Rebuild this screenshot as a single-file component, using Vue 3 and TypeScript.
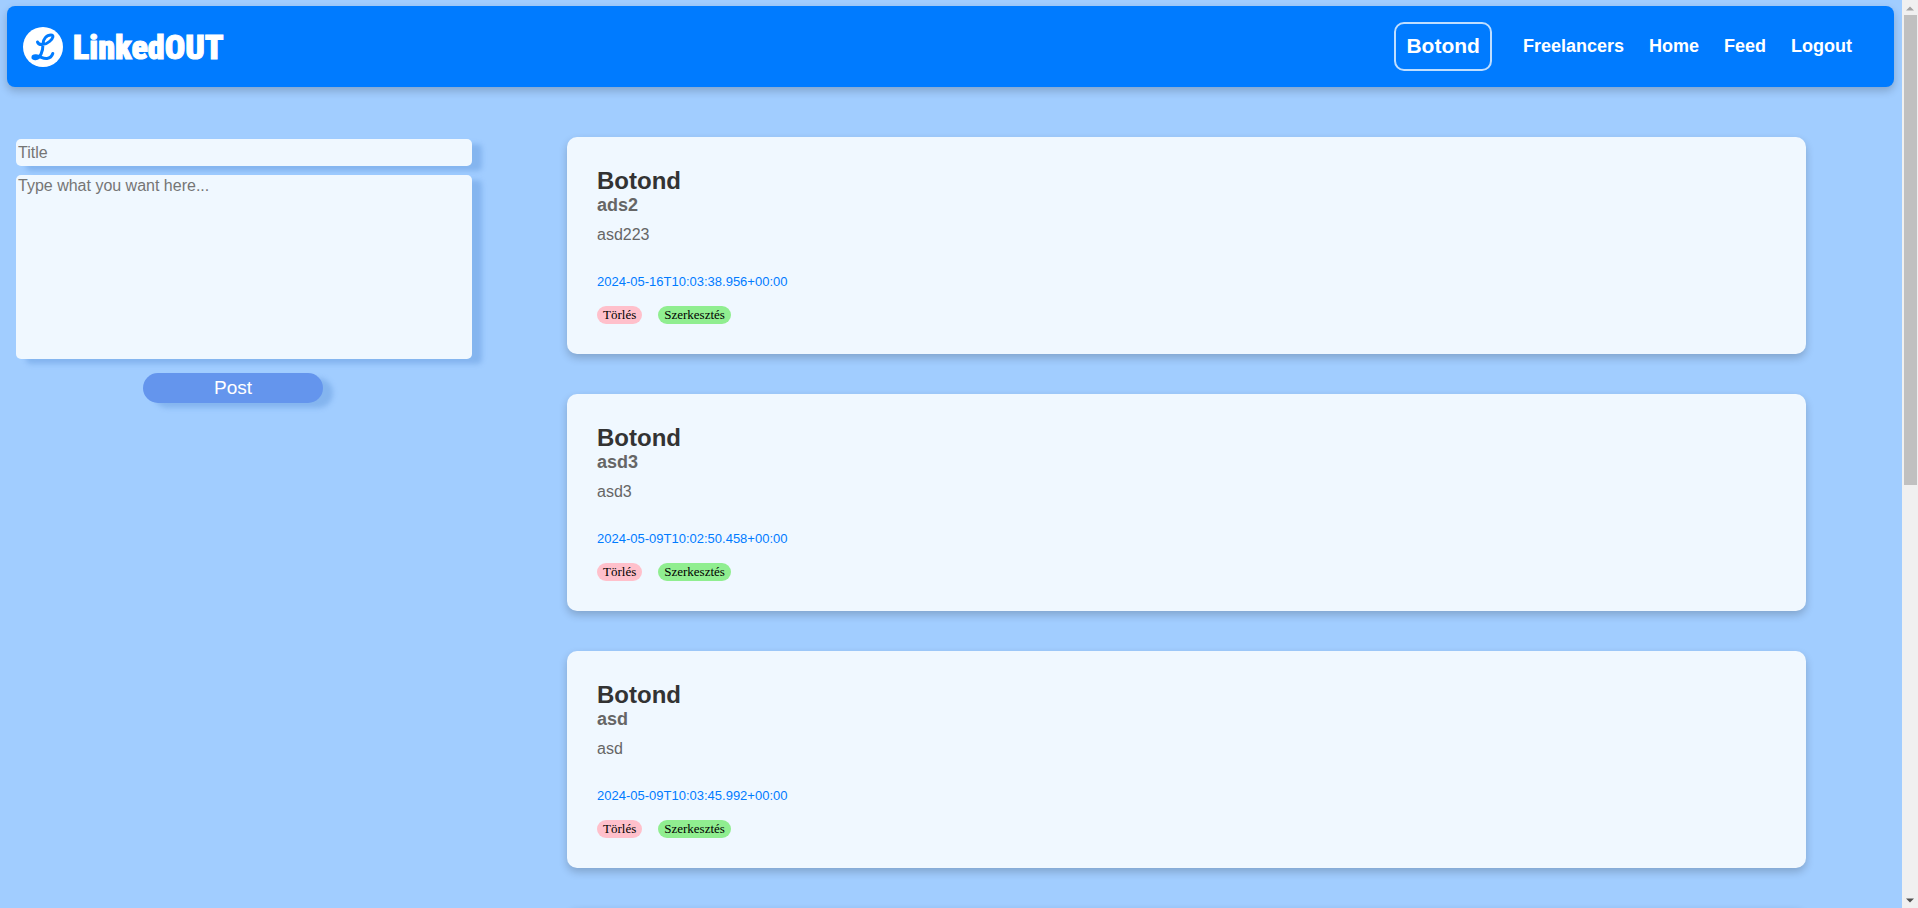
<script setup lang="ts">
import { ref } from 'vue'

interface Post {
  id: number
  author: string
  title: string
  body: string
  date: string
}

const title = ref('')
const body = ref('')

const links: string[] = ['Freelancers', 'Home', 'Feed', 'Logout']

const posts: Post[] = [
  { id: 1, author: 'Botond', title: 'ads2', body: 'asd223', date: '2024-05-16T10:03:38.956+00:00' },
  { id: 2, author: 'Botond', title: 'asd3', body: 'asd3', date: '2024-05-09T10:02:50.458+00:00' },
  { id: 3, author: 'Botond', title: 'asd', body: 'asd', date: '2024-05-09T10:03:45.992+00:00' },
]
</script>

<template>
  <div class="page">
    <div class="content">
      <header class="bar">
        <a class="brand" href="#">
          <svg class="logo" viewBox="0 0 40 40" aria-hidden="true">
            <circle cx="20" cy="20" r="20" fill="#fff" />
            <path
              d="M14.5 15C15.5 18.5 22 18.500 26.500 14.500C30.500 11 31 8 28 8C23.500 8 20 12 20 17C20 24 17.500 31.500 12.500 31.800C9 32 9 28.500 13 28.800C18 29.200 19.500 32 24 31.500C27.500 31 29 29 29.800 26.500"
              fill="none"
              stroke="#007bff"
              stroke-width="3"
              stroke-linecap="round"
              stroke-linejoin="round"
            />
          </svg>
          <span class="wordmark">LinkedOUT</span>
        </a>
        <nav class="nav">
          <a class="user" href="#">Botond</a>
          <a v-for="link in links" :key="link" class="link" href="#">{{ link }}</a>
        </nav>
      </header>

      <main class="columns">
        <form class="composer" @submit.prevent>
          <input v-model="title" class="field" type="text" placeholder="Title" aria-label="Title" />
          <textarea v-model="body" class="field area" placeholder="Type what you want here..." aria-label="Post text"></textarea>
          <button class="submit" type="submit">Post</button>
        </form>

        <section class="feed">
          <article v-for="post in posts" :key="post.id" class="card">
            <h2 class="author">{{ post.author }}</h2>
            <h3 class="title">{{ post.title }}</h3>
            <p class="text">{{ post.body }}</p>
            <p class="date">{{ post.date }}</p>
            <div class="actions">
              <button class="chip remove" type="button">Törlés</button>
              <button class="chip edit" type="button">Szerkesztés</button>
            </div>
          </article>
          <div class="card" aria-hidden="true"></div>
        </section>
      </main>
    </div>

    <div class="scrollbar" aria-hidden="true">
      <svg class="arrow" viewBox="0 0 16 12"><path d="M4 9h8L8 5z" fill="#a3a3a3" /></svg>
      <div class="track"><div class="thumb"></div></div>
      <svg class="arrow" viewBox="0 0 16 12"><path d="M4 4h8L8 8z" fill="#505050" /></svg>
    </div>
  </div>
</template>

<style>
body {
  margin: 0;
  background: #a1cdff;
}
</style>

<style scoped>
.page {
  display: flex;
  height: 100vh;
  overflow: hidden;
  font-family: Arial, "Liberation Sans", sans-serif;
}

.content {
  flex: 1;
  min-width: 0;
  overflow: hidden;
}

.bar {
  display: flex;
  align-items: center;
  justify-content: space-between;
  margin: 6px 8px 0 7px;
  padding: 16px 42px 16px 16px;
  border-radius: 8px;
  background: #007bff;
  box-shadow: 0 4px 8px rgba(0, 0, 0, 0.2);
}

.brand {
  display: flex;
  align-items: center;
  gap: 10px;
  color: #fff;
  text-decoration: none;
}

.logo {
  width: 40px;
  height: 40px;
}

.wordmark {
  font: 900 34px/40px Impact, "Roboto Condensed", Roboto, sans-serif;
  -webkit-text-stroke: 1px #fff;
}

.nav {
  display: flex;
  align-items: center;
  gap: 25px;
}

.user,
.link {
  color: #fff;
  font-size: 18px;
  font-weight: bold;
  text-decoration: none;
}

.user {
  margin-right: 6px;
  padding: 9px 10px 11px;
  border: 2px solid #bfdeff;
  border-radius: 10px;
  font-size: 21px;
  line-height: 25px;
}

.columns {
  display: flex;
  align-items: flex-start;
  justify-content: space-between;
  padding: 50px 96px 0 16px;
}

.composer {
  display: flex;
  flex: 0 0 456px;
  flex-direction: column;
  align-items: center;
  margin-top: 2px;
}

.field {
  box-sizing: border-box;
  width: 100%;
  height: 27px;
  margin: 0 0 9px;
  padding: 2px;
  border: 0;
  border-radius: 5px;
  outline: 0;
  background: #f0f8ff;
  box-shadow: 10px 5px 5px rgba(90, 145, 215, 0.4);
  color: #333;
  font: 16px Arial, "Liberation Sans", sans-serif;
}

.field::placeholder {
  color: #757575;
}

.area {
  height: 184px;
  margin-bottom: 14px;
  resize: none;
}

.submit {
  width: 180px;
  height: 30px;
  margin-right: 22px;
  padding: 0;
  border: 0;
  border-radius: 15px;
  background: #6495ed;
  box-shadow: 10px 5px 5px rgba(90, 145, 215, 0.4);
  color: #fff;
  font: 19px Arial, "Liberation Sans", sans-serif;
}

.feed {
  display: flex;
  flex: 0 1 1239px;
  flex-direction: column;
  gap: 40px;
}

.card {
  padding: 30px;
  border-radius: 10px;
  background: #f0f8ff;
  box-shadow: 0 4px 8px rgba(0, 0, 0, 0.2);
}

.author,
.title,
.text,
.date {
  margin: 0;
}

.author {
  color: #333;
  font-size: 24px;
  line-height: 28px;
}

.title {
  margin-bottom: 11px;
  color: #666;
  font-size: 18px;
  line-height: 20px;
}

.text {
  margin-bottom: 30px;
  color: #666;
  font-size: 16px;
  line-height: 18px;
}

.date {
  margin-bottom: 16px;
  color: #007bff;
  font-size: 13px;
  line-height: 16px;
}

.actions {
  display: flex;
  gap: 16px;
}

.chip {
  height: 18px;
  padding: 0 6px;
  border: 0;
  border-radius: 9px;
  color: #000;
  font: 13px/18px "Times New Roman", "Liberation Serif", serif;
}

.remove {
  background: #ffc0cb;
}

.edit {
  background: #90ee90;
}

.scrollbar {
  display: flex;
  flex: 0 0 16px;
  flex-direction: column;
  background: #f0f0f0;
}

.arrow {
  width: 16px;
  height: 15px;
}

.track {
  flex: 1;
  padding: 0 1px 0 2px;
}

.thumb {
  height: 53.5%;
  background: #c0c0c0;
}
</style>
